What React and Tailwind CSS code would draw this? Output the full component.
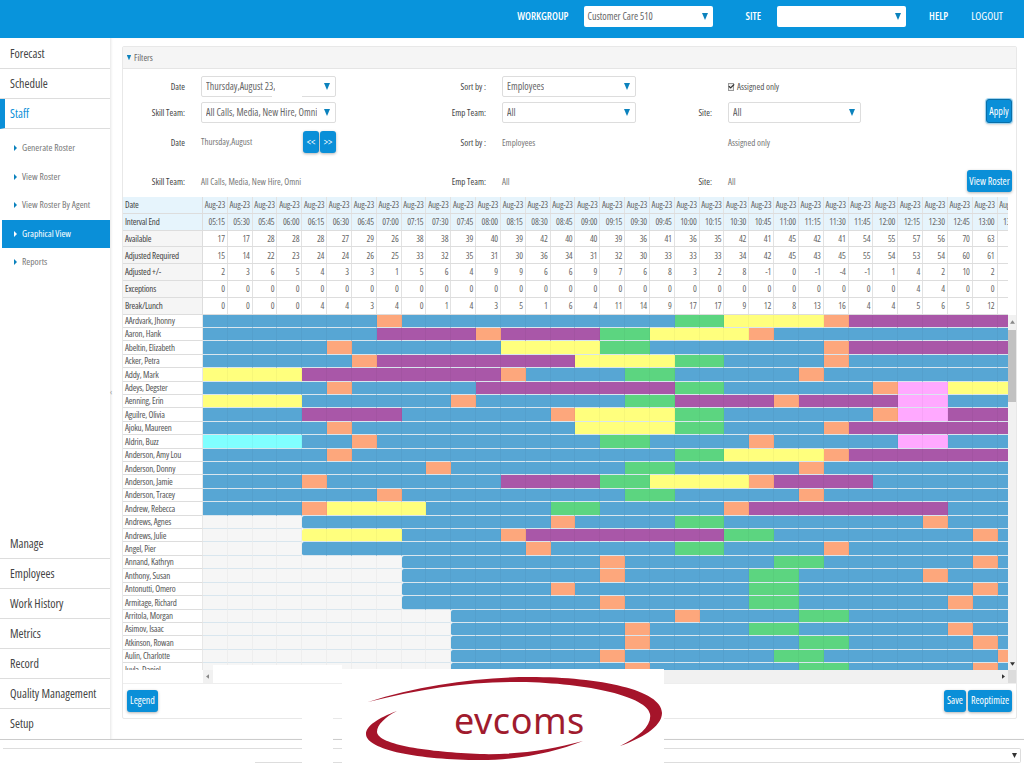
import { Check } from "lucide-react";

const TOP_NAV = ["Forecast", "Schedule", "Staff"];
const SUB_NAV = ["Generate Roster", "View Roster", "View Roster By Agent", "Graphical View", "Reports"];
const BOTTOM_NAV = ["Manage", "Employees", "Work History", "Metrics", "Record", "Quality Management", "Setup"];

const TIMES = ["05:15","05:30","05:45","06:00","06:15","06:30","06:45","07:00","07:15","07:30","07:45","08:00","08:15","08:30","08:45","09:00","09:15","09:30","09:45","10:00","10:15","10:30","10:45","11:00","11:15","11:30","11:45","12:00","12:15","12:30","12:45","13:00","13:15"];

const STATS = [
  ["Available", [17,17,28,28,28,27,29,26,38,38,39,40,39,42,40,40,39,36,41,36,35,42,41,45,42,41,54,55,57,56,70,63,""]],
  ["Adjusted Required", [15,14,22,23,24,24,26,25,33,32,35,31,30,36,34,31,32,30,33,33,33,34,42,45,43,45,55,54,53,54,60,61,""]],
  ["Adjusted +/-", [2,3,6,5,4,3,3,1,5,6,4,9,9,6,6,9,7,6,8,3,2,8,-1,0,-1,-4,-1,1,4,2,10,2,""]],
  ["Exceptions", [0,0,0,0,0,0,0,0,0,0,0,0,0,0,0,0,0,0,0,0,0,0,0,0,0,0,0,0,4,4,0,0,""]],
  ["Break/Lunch", [0,0,0,0,4,4,3,4,0,1,4,3,5,1,6,4,11,14,9,17,17,9,12,8,13,16,4,4,5,6,5,12,""]],
];

const COLORS = {
  b: "bg-[#57a6d4]",
  o: "bg-[#fda77c]",
  p: "bg-[#a957a8]",
  y: "bg-[#ffff7d]",
  g: "bg-[#5cd580]",
  c: "bg-[#80ffff]",
  k: "bg-[#ffa9ff]",
  e: "bg-[#f6f6f6]",
};

const AGENTS = [
  ["AArdvark, Jhonny", "b7 o1 b11 g2 y4 o1 p7"],
  ["Aaron, Hank", "b7 p4 o1 p4 g2 y4 o1 b10"],
  ["Abeltin, Elizabeth", "b5 o1 b6 y4 g2 b7 o1 p7"],
  ["Acker, Petra", "b6 o1 p8 y4 g2 b4 o1 b7"],
  ["Addy, Mark", "y4 p8 o1 b4 g2 b5 o1 b8"],
  ["Adeys, Degster", "b5 o1 b5 p8 g2 b6 o1 k2 y3"],
  ["Aenning, Erin", "y4 b6 o1 b6 g2 p4 o1 p4 k2 b3"],
  ["Aguilre, Olivia", "b4 p4 b6 o1 y4 g2 b6 o1 k2 p3"],
  ["Ajoku, Maureen", "b5 o1 b9 y4 g2 b4 o1 p7"],
  ["Aldrin, Buzz", "c4 b2 o1 b9 g2 b4 o1 b5 k2 b3"],
  ["Anderson, Amy Lou", "b5 o1 b13 g2 y4 o1 p7"],
  ["Anderson, Donny", "b9 o1 b7 g2 b5 o1 b8"],
  ["Anderson, Jamie", "b4 o1 b7 p4 g2 y4 o1 p4 b6"],
  ["Anderson, Tracey", "b7 o1 b9 g2 b5 o1 b8"],
  ["Andrew, Rebecca", "b4 o1 y4 b5 g2 b5 o1 p8 b3"],
  ["Andrews, Agnes", "e4 b10 o1 b4 g2 b8 o1 b3"],
  ["Andrews, Julie", "e4 y4 b4 o1 p8 g2 b8 o1 b1"],
  ["Angel, Pier", "e4 b9 o1 b5 g2 b4 o1 b7"],
  ["Annand, Kathryn", "e8 b8 o1 b6 g2 b6 o1 b1"],
  ["Anthony, Susan", "e8 b8 o1 b5 g2 b5 o1 b3"],
  ["Antonutti, Omero", "e8 b6 o1 b7 g2 b7 o1 b1"],
  ["Armitage, Richard", "e8 b8 o1 b5 g2 b6 o1 b2"],
  ["Arritola, Morgan", "e10 b9 o1 b4 g2 b7"],
  ["Asimov, Isaac", "e10 b7 o1 b4 g2 b6 o1 b2"],
  ["Atkinson, Rowan", "e10 b7 o1 b6 g2 b5 o1 b1"],
  ["Aulin, Charlotte", "e10 b6 o1 b6 g2 b7 o1"],
  ["Juvla, Daniel", "e10 b7 o1 b6 g2 b5 o1 b1"],
];

// "b7 o1" -> ["b","b",...,"o"], one colour per interval
const expand = (spec) =>
  spec.split(" ").flatMap((s) => Array(Number(s.slice(1))).fill(s[0]));

function Arrow({ className = "" }) {
  return (
    <svg viewBox="0 0 6 7" className={`w-[6px] h-[7px] shrink-0 ${className}`}>
      <polygon points="0,0 6,0 3,7" fill="#0b82bd" />
    </svg>
  );
}

function Select({ value, className = "", children }) {
  return (
    <div className={`relative h-[21px] flex items-center justify-between bg-white border border-[#dddddd] rounded-[2px] pl-[4px] pr-[5px] text-[10px] text-[#666] ${className}`}>
      <span className="truncate">{value}</span>
      <Arrow />
      {children}
    </div>
  );
}

function Btn({ children, className = "" }) {
  return (
    <button className={`h-[22px] bg-[#0a8fd8] text-white text-[10px] whitespace-nowrap rounded-[3px] shadow-[0_1px_3px_rgba(0,0,0,0.3)] ${className}`}>
      {children}
    </button>
  );
}

function Label({ children }) {
  return <div className="h-[21px] flex items-center justify-end pr-4 text-[9px] font-medium text-[#444]">{children}</div>;
}

function Value({ children }) {
  return <div className="h-[21px] flex items-center text-[9px] text-[#777]">{children}</div>;
}

function Sidebar() {
  const navItem = "h-[30px] flex items-center text-[12px] border-b border-[#dddddd]";
  return (
    <aside className="w-[110px] shrink-0 flex flex-col justify-between pt-[1px] bg-white">
      <div>
        {TOP_NAV.map((n) => (
          <div key={n} className={`${navItem} ${n === "Staff" ? "text-[#0a8fd8] font-medium border-l-[5px] border-l-[#0a8fd8] pl-[5px]" : "text-[#444] pl-[10px]"}`}>{n}</div>
        ))}
        <div className="pt-[5px]">
          {SUB_NAV.map((n) => (
            <div key={n} className={`h-[28.5px] ml-[2px] flex items-center gap-[5px] pl-[12px] text-[9.5px] ${n === "Graphical View" ? "bg-[#0a8fd8] text-white" : "text-[#777]"}`}>
              <svg viewBox="0 0 3 6" className="w-[3px] h-[6px] shrink-0">
                <polygon points="0,0 3,3 0,6" fill={n === "Graphical View" ? "#ffffff" : "#0b82bd"} />
              </svg>
              {n}
            </div>
          ))}
        </div>
      </div>
      <div>
        {BOTTOM_NAV.map((n) => (
          <div key={n} className={`${navItem} text-[#444] pl-[10px] ${n === "Setup" ? "border-b-0" : ""}`}>{n}</div>
        ))}
      </div>
    </aside>
  );
}

function Filters() {
  return (
    <div className="h-[128px] pt-[7px] grid grid-cols-[78px_135px_166px_134px_92px_133px_151px] grid-rows-[21px_26px_30px_39px] items-end">
      <div className="self-start"><Label>Date</Label></div>
      <Select value="Thursday,August 23," className="self-start">
        <span className="absolute left-[70px] -bottom-[1px] w-[30px] h-[1px] bg-white" />
      </Select>
      <div className="self-start"><Label>Sort by :</Label></div>
      <Select value="Employees" className="self-start" />
      <div />
      <div className="self-start h-[21px] flex items-center gap-[3px] text-[9px] text-[#555]">
        <span className="w-[6px] h-[8px] flex items-center justify-center bg-[#eee] border border-[#999]">
          <Check size={7} strokeWidth={4} className="text-[#333] shrink-0" />
        </span>
        Assigned only
      </div>
      <div />

      <Label>Skill Team:</Label>
      <Select value="All Calls, Media, New Hire, Omni" />
      <Label>Emp Team:</Label>
      <Select value="All" />
      <Label>Site:</Label>
      <Select value="All" />
      <div className="flex justify-end">
        <Btn className="h-[24px] w-[26px] border border-[#0a6fa8] ring-1 ring-[#9fd4f0]">Apply</Btn>
      </div>

      <Label>Date</Label>
      <div className="flex items-center justify-between">
        <Value>Thursday,August</Value>
        <div className="flex gap-[1px]">
          <Btn className="w-[16px]">&lt;&lt;</Btn>
          <Btn className="w-[16px]">&gt;&gt;</Btn>
        </div>
      </div>
      <Label>Sort by :</Label>
      <Value>Employees</Value>
      <div />
      <Value>Assigned only</Value>
      <div />

      <Label>Skill Team:</Label>
      <Value>All Calls, Media, New Hire, Omni</Value>
      <Label>Emp Team:</Label>
      <Value>All</Value>
      <Label>Site:</Label>
      <Value>All</Value>
      <div className="flex justify-end">
        <Btn className="w-[45px]">View Roster</Btn>
      </div>
    </div>
  );
}

function StatRow({ label, cells, head, center }) {
  return (
    <div className="flex h-[16.8px] border-b border-[#dddddd] text-[9px] tracking-[-0.2px]">
      <div className={`w-[80px] shrink-0 flex items-center pl-[2px] font-medium text-[#444] border-r border-[#dddddd] ${head ? "bg-[#e6f4fc]" : "bg-[#f5f5f5]"}`}>{label}</div>
      {cells.map((c, i) => (
        <div key={i} className={`w-[24.83px] shrink-0 flex items-center text-[#666] border-r border-[#e2e2e2] whitespace-nowrap overflow-hidden ${center ? "justify-center" : "justify-end pr-[2px]"} ${head ? "bg-[#e6f4fc]" : "bg-white"}`}>{c}</div>
      ))}
    </div>
  );
}

function Gantt() {
  return (
    <div className="flex h-[355px]">
      <div className="w-[885px] shrink-0 overflow-hidden">
        {AGENTS.map(([name, spec]) => (
          <div key={name} className="flex h-[13.42px]">
            <div className="w-[80px] shrink-0 flex items-center pl-[2px] text-[9px] tracking-[-0.2px] text-[#555] bg-white border-b border-[#dddddd] border-r border-r-[#e8e8e8]">{name}</div>
            {expand(spec).map((c, i, all) => (
              <div key={i} className={`w-[24.83px] shrink-0 border-b border-b-[#d9e6ee] border-r border-r-black/[0.03] ${COLORS[c]} ${c !== "e" && all[i - 1] === "e" ? "rounded-l-[2px]" : ""}`} />
            ))}
          </div>
        ))}
      </div>
      <div className="w-[8px] shrink-0 flex flex-col items-center bg-[#f1f1f1]">
        <div className="h-[15px] flex items-center">
          <svg viewBox="0 0 6 4" className="w-[5px] h-[4px]"><polygon points="3,0 6,4 0,4" fill="#888" /></svg>
        </div>
        <div className="w-full h-[72px] bg-[#c1c1c1]" />
        <div className="mt-auto mb-[4px]">
          <svg viewBox="0 0 6 4" className="w-[5px] h-[4px]"><polygon points="0,0 6,0 3,4" fill="#333" /></svg>
        </div>
      </div>
    </div>
  );
}

function HScroll() {
  return (
    <div className="flex h-[14px] border-b border-[#eeeeee]">
      <div className="w-[80px] shrink-0 bg-white" />
      <div className="flex-1 flex items-center justify-between px-[3px] bg-[#f1f1f1]">
        <svg viewBox="0 0 4 6" className="w-[3px] h-[5px]"><polygon points="4,0 4,6 0,3" fill="#888" /></svg>
        <svg viewBox="0 0 4 6" className="w-[3px] h-[5px]"><polygon points="0,0 4,3 0,6" fill="#333" /></svg>
      </div>
      <div className="w-[8px] shrink-0 bg-[#dcdcdc]" />
    </div>
  );
}

function Logo() {
  return (
    <div className="absolute left-[342px] top-[669px] w-[322px] h-[99px] bg-white">
      <svg viewBox="342 669 322 99" className="absolute inset-0 w-full h-full">
        <path fill="#a5142a" d="M368 702 C420 685 480 677 530 677 C600 677 662 690 662 713 C662 727 640 739 620 746 C640 736 652 725 650 714 C647 697 590 683 520 682 C470 681 420 689 368 702 Z" />
        <path fill="#a5142a" d="M397 711 C378 718 366 726 366 734 C366 750 420 760 480 760 C520 760 555 752 583 741 C550 750 515 755 480 754 C430 752 378 745 377 732 C377 725 385 717 397 711 Z" />
      </svg>
      <span className="absolute left-[112px] top-[30px] text-[36px] leading-[44px] tracking-[0.5px] [font-stretch:100%] text-[#a01b2e] font-['Noto_Sans',sans-serif]">evcoms</span>
    </div>
  );
}

export default function App() {
  return (
    <div className="relative w-[1024px] h-[768px] overflow-hidden bg-white font-['Open_Sans','Lato',sans-serif] [font-stretch:75%]">
      <header className="h-[38px] flex items-center justify-end pr-[21px] pb-[5px] bg-[#0894dc] text-white text-[10.5px] font-semibold">
        <span className="mr-[16px]">WORKGROUP</span>
        <div className="w-[129px] h-[21px] mr-[32px] flex items-center justify-between px-[3px] pr-[5px] bg-white rounded-[2px] font-normal text-[10px] text-[#666]">
          Customer Care 510 <Arrow />
        </div>
        <span className="mr-[16px]">SITE</span>
        <div className="w-[129px] h-[21px] mr-[23px] flex items-center justify-end pr-[5px] bg-white rounded-[2px]"><Arrow /></div>
        <span className="mr-[23px]">HELP</span>
        <span className="font-normal text-[11px]">LOGOUT</span>
      </header>

      <div className="h-[702px] flex border-b border-[#cccccc]">
        <Sidebar />
        <main className="relative flex-1 pl-[11px] pt-[8px] pr-[7px] border-l border-[#eeeeee] shadow-[inset_1px_0_2px_rgba(0,0,0,0.05)]">
          <span className="absolute -left-[1px] top-[348px] text-[8px] text-[#999]">‹</span>
          <section className="h-[673px] border border-[#e8e8e8] rounded-[2px]">
            <div className="h-[22px] flex items-center gap-[2px] pl-[3px] bg-[#f5f5f5] border-b border-[#e5e5e5] text-[9px] text-[#666]">
              <Arrow className="scale-75" />
              Filters
            </div>
            <Filters />
            <div className="overflow-hidden w-[885px]">
              <StatRow label="Date" cells={TIMES.map(() => "Aug-23")} head center />
              <StatRow label="Interval End" cells={TIMES} head />
              {STATS.map(([label, vals]) => (
                <StatRow key={label} label={label} cells={vals} />
              ))}
            </div>
            <Gantt />
            <HScroll />
            <div className="h-[34px] flex items-center justify-between px-[4px]">
              <Btn className="w-[31px]">Legend</Btn>
              <div className="flex gap-[2px]">
                <Btn className="w-[22px]">Save</Btn>
                <Btn className="w-[44px]">Reoptimize</Btn>
              </div>
            </div>
          </section>
        </main>
      </div>

      <div className="mt-[8px] ml-[3px] mr-[3px] h-[15px] flex items-center justify-end pr-[3px] bg-white border border-l-0 border-[#dddddd] rounded-r-[2px]">
        <svg viewBox="0 0 6 6" className="w-[5px] h-[5px]"><polygon points="0,0 6,0 3,6" fill="#333" /></svg>
      </div>

      {/* white holes the screenshot has around the logo */}
      <div className="absolute left-[213px] top-[665px] w-[129px] h-[18px] bg-white" />
      <div className="absolute left-[302px] top-[715px] w-[31px] h-[53px] bg-white" />
      <div className="absolute left-0 top-[760px] w-[255px] h-[8px] bg-white" />
      <Logo />
    </div>
  );
}
